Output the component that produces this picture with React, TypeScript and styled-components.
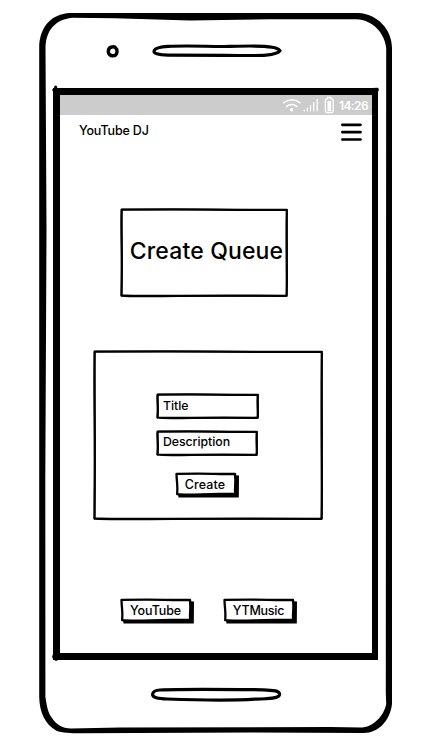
import React from "react";
import styled, { createGlobalStyle } from "styled-components";

const Reset = createGlobalStyle`
  * { box-sizing: border-box; }
  body { margin: 0; background: #fff; color: #000; font-family: Inter, "Liberation Sans", sans-serif; }
  button, input { font: inherit; color: inherit; }
`;

const Page = styled.main`
  width: 435px;
  height: 751px;
  padding: 13px 0 0 39px;
  overflow: hidden;
`;

const Phone = styled.div`
  position: relative;
  width: 353px;
  height: 721px;
  padding: 0 13px 0 14px;
  display: flex;
  flex-direction: column;
`;

const Outline = styled.svg`
  position: absolute;
  inset: 0;
  width: 100%;
  height: 100%;
  overflow: visible;
  pointer-events: none;
`;

const Earpiece = styled.div`
  height: 75px;
  padding: 29px 0 0 53px;
  display: flex;
  align-items: flex-start;
  gap: 39px;
  svg { display: block; overflow: visible; }
`;

const HomeArea = styled.div`
  padding: 27px 0 0 97px;
  svg { display: block; overflow: visible; }
`;

const Screen = styled.section`
  position: relative;
  width: 325px;
  height: 572px;
  flex: none;
  border: solid #000;
  border-width: 7px 6px 7px 7px;
  display: flex;
  flex-direction: column;
  align-items: stretch;
`;

const StatusBar = styled.div`
  height: 20px;
  background: #ccc;
  color: #fff;
  display: flex;
  justify-content: flex-end;
  align-items: center;
  padding-right: 4px;
  gap: 5px;
  svg { display: block; }
`;

const Clock = styled.time`
  font-size: 12px;
  line-height: 20px;
  font-weight: 600;
  width: 29px;
  padding-top: 1px;
  white-space: nowrap;
  letter-spacing: -0.6px;
`;

const Header = styled.header`
  height: 32px;
  display: flex;
  justify-content: space-between;
  padding: 7px 10px 0 19px;
`;

const Brand = styled.span`
  font-size: 12.5px;
  font-weight: 450;
  line-height: 18px;
  letter-spacing: -0.17px;
`;

const MenuButton = styled.button`
  width: 21px;
  height: 18px;
  margin-top: 1px;
  padding: 0;
  border: 0;
  background: none;
  svg { display: block; }
`;

const Content = styled.div`
  display: flex;
  flex-direction: column;
  align-items: flex-start;
  padding-top: 61px;
`;

const Hero = styled.div`
  position: relative;
  width: 168px;
  height: 89px;
  margin-left: 60px;
  display: flex;
  align-items: center;
  justify-content: center;
`;

const HeroTitle = styled.h1`
  margin: 0;
  padding: 0 0 3px 5px;
  font-size: 23px;
  font-weight: 450;
  line-height: 28px;
  letter-spacing: 0.15px;
  white-space: nowrap;
`;

const FormCard = styled.form`
  position: relative;
  width: 230px;
  height: 170px;
  margin: 53px 0 0 33px;
  padding: 43px 0 0 63px;
  display: flex;
  flex-direction: column;
  align-items: flex-start;
`;

const Field = styled.div<{ $width: number; $drop?: number }>`
  position: relative;
  width: ${(p) => p.$width}px;
  height: 26px;
  margin-bottom: 11px;
  padding: ${(p) => p.$drop ?? 0}px 0 2px 7px;
  display: flex;
  align-items: center;
  font-size: 12.3px;
  font-weight: 450;
  line-height: 16px;
  letter-spacing: -0.05px;
`;

const PushButton = styled.button<{ $width: number }>`
  position: relative;
  width: ${(p) => p.$width}px;
  height: 26px;
  padding: 0 4px 0 0;
  border: 0;
  background: none;
  font-size: 12.5px;
  font-weight: 450;
  line-height: 16px;
  white-space: nowrap;
`;

const FormAction = styled.div`
  display: flex;
  margin: 5px 0 0 19px;
`;

const Services = styled.div`
  display: flex;
  gap: 29px;
  margin: 78px 0 0 60px;
`;

const Label = styled.span<{ $track: number; $shift: number }>`
  position: relative;
  letter-spacing: ${(p) => p.$track}px;
  padding-left: ${(p) => p.$shift}px;
`;

function SketchFrame({ w, h }: { w: number; h: number }) {
  const r = w - 1.2;
  const b = h - 1.2;
  return (
    <Outline viewBox={`0 0 ${w} ${h}`} fill="none" stroke="#000" strokeLinejoin="round" strokeLinecap="round" aria-hidden>
      <path
        strokeWidth="2.3"
        d={`M1.6 1.7 Q${w * 0.3} 1.2 ${w * 0.55} 1.6 T${r} 1.8 Q${r - 0.4} ${h * 0.3} ${r - 0.1} ${h * 0.6} T${r - 0.3} ${b} Q${w * 0.65} ${b - 0.5} ${w * 0.35} ${b} T1.5 ${b - 0.3} Q2 ${h * 0.65} 1.6 ${h * 0.4} T1.6 1.7Z`}
      />
      <path
        strokeWidth="1.5"
        d={`M2 1.5 L${w * 0.45} 1.5 L${r} 1.8 L${r + 0.3} ${h * 0.5} L${r} ${b} M1.5 ${b} L1.9 ${h * 0.6} L1.7 2 M${w * 0.3} ${b} L${r} ${b + 0.3}`}
      />
    </Outline>
  );
}

function ButtonFrame({ w }: { w: number }) {
  const r = w - 3;
  return (
    <Outline viewBox={`0 0 ${w} 26`} aria-hidden>
      <path d={`M${r - 1} 3.2 L${w} 3.4 L${w - 0.2} 25.6 L3.5 25.4 L3 22 L${r - 1} 21Z`} />
      <path
        fill="#fff"
        stroke="#000"
        strokeWidth="2.3"
        strokeLinejoin="round"
        d={`M1.5 1.9 Q${w * 0.35} 1.4 ${w * 0.6} 1.8 T${r - 1} 1.8 Q${r - 0.4} 8 ${r - 0.8} 13 T${r - 0.8} 21.6 Q${w * 0.7} 21.8 ${w * 0.42} 22.4 T2.2 22.2 Q2.6 16 2.1 11 T1.5 1.9Z`}
      />
    </Outline>
  );
}

interface ButtonProps {
  text: string;
  width: number;
  track?: number;
  shift?: number;
}

function Button({ text, width, track = 0, shift = 0 }: ButtonProps) {
  return (
    <PushButton type="button" $width={width}>
      <ButtonFrame w={width} />
      <Label $track={track} $shift={shift}>{text}</Label>
    </PushButton>
  );
}

export default function App() {
  return (
    <>
      <Reset />
      <Page>
        <Phone>
          <Outline viewBox="39 13 353 721" aria-hidden>
            <path
              fillRule="evenodd"
              d="M70 13 H358 C378 14 392 30 392 48 V704 C390 721 378 733 364 733 L250 732.6 L80 733.2 C71 733.2 62 733.2 56 730.5 C45 724 39.5 712 39.2 697 V46 C40 27 51 14 70 13Z
                 M72 17.8 C55 20 46 30 45.5 48 L46.5 230 L45.3 480 L45.4 697 C47 707 48 713 52 718 C56 724 62 728.3 71 728.6 L120 727.6 L330 727.1 L362 727.5 C373 727 384 716 386.2 704 L385.8 693 L386.2 48 C385 34 373 19.5 356 19.2 H270 L190 20.4 L115 18.2Z"
            />
          </Outline>
          <Earpiece>
            <svg width="14" height="16" viewBox="0 0 14 16" aria-hidden>
              <path fill="none" stroke="#000" strokeWidth="3.4" d="M6 4.6 C8.5 3.8 11.3 6 11 9.3 C11 12.2 9 13.5 6.8 13.4 C4 13.4 2.3 11.3 2.3 9 C2.4 6.5 3.7 4.8 6 4.6Z" transform="translate(0 .4)" />
            </svg>
            <svg width="131" height="16" viewBox="152 42 131 16" transform="translate(-7 0)" aria-hidden>
              <path fill="none" stroke="#000" strokeWidth="3.1" d="M168 46.4 C190 45.2 210 46.8 230 46.4 C250 46 277 44.5 280 50.7 C276 57 252 55.4 225 55.4 L168 55.1 C160 55 154 53.8 154 51.5 C154 48.2 161 46.9 168 46.4Z" />
            </svg>
          </Earpiece>
          <Screen>
            <StatusBar>
              <svg width="52" height="20" viewBox="282 95 52 20" fill="none" stroke="#fff" aria-hidden>
                <path strokeWidth="1.5" d="M283 103.2 Q291.8 96.2 300.5 103.2 M286 106.8 Q291.8 102.3 297.4 106.8" />
                <circle cx="291.6" cy="109.8" r="1.7" fill="#fff" stroke="none" />
                <path strokeWidth="1.3" d="M304.2 111.5 V109.5 M307.3 111.5 V107.7 M310.5 111.5 V105.3 M313.7 111.5 V102.3 M317.2 111.5 V99" />
                <path strokeWidth="1.3" d="M327.5 98.8 V97.5 H331 V98.8 Q333.2 98.8 333.2 100.5 V111 Q333.2 112.5 331.7 112.5 H326.9 Q325.4 112.5 325.4 111 V100.5 Q325.4 98.8 327.5 98.8Z" />
                <rect x="327.5" y="101" width="3.6" height="10" fill="#fff" stroke="none" />
              </svg>
              <Clock>14:26</Clock>
            </StatusBar>
            <Header>
              <Brand>YouTube DJ</Brand>
              <MenuButton type="button" aria-label="Menu">
                <svg width="21" height="18" viewBox="0 0 21 18" stroke="#000" strokeWidth="2.7" strokeLinecap="round" aria-hidden>
                  <path d="M1.4 1.8 H19.5 M1.4 9.2 H19.5 M1.4 16.5 H19.5" />
                </svg>
              </MenuButton>
            </Header>
            <Content>
              <Hero>
                <SketchFrame w={168} h={89} />
                <HeroTitle>Create Queue</HeroTitle>
              </Hero>
              <FormCard>
                <SketchFrame w={230} h={170} />
                <Field $width={103} $drop={2}>
                  <SketchFrame w={103} h={26} />
                  Title
                </Field>
                <Field $width={102}>
                  <SketchFrame w={102} h={26} />
                  Description
                </Field>
                <FormAction>
                  <Button text="Create" width={64} track={0.1} />
                </FormAction>
              </FormCard>
              <Services>
                <Button text="YouTube" width={74} track={-0.15} shift={1} />
                <Button text="YTMusic" width={74} track={-0.25} shift={1} />
              </Services>
            </Content>
            <Outline viewBox="60 95 312 558" aria-hidden>
              <path d="M52 90 L54 88 L54.5 86 Q56 84.8 57.2 87 L57.5 91 L53.5 92Z M53 654 L52 657 L53.5 659.5 L56 661 L59 659.5 L59 654Z" />
              <path d="M372 88 L378 87.8 L379 89.5 L378 92Z" />
            </Outline>
          </Screen>
          <HomeArea>
            <svg width="132" height="15" viewBox="150 687 132 15" aria-hidden>
              <path fill="none" stroke="#000" strokeWidth="3.2" d="M160 690 C180 689 230 689.4 263 689.8 C274 690 279.8 691 279.6 694.5 C279 698.5 270 698.8 255 699.2 C225 701 195 700 167 699 C158 698.5 152.5 697.5 152.6 694.3 C152.8 691.3 156 690.2 160 690Z" />
            </svg>
          </HomeArea>
        </Phone>
      </Page>
    </>
  );
}
